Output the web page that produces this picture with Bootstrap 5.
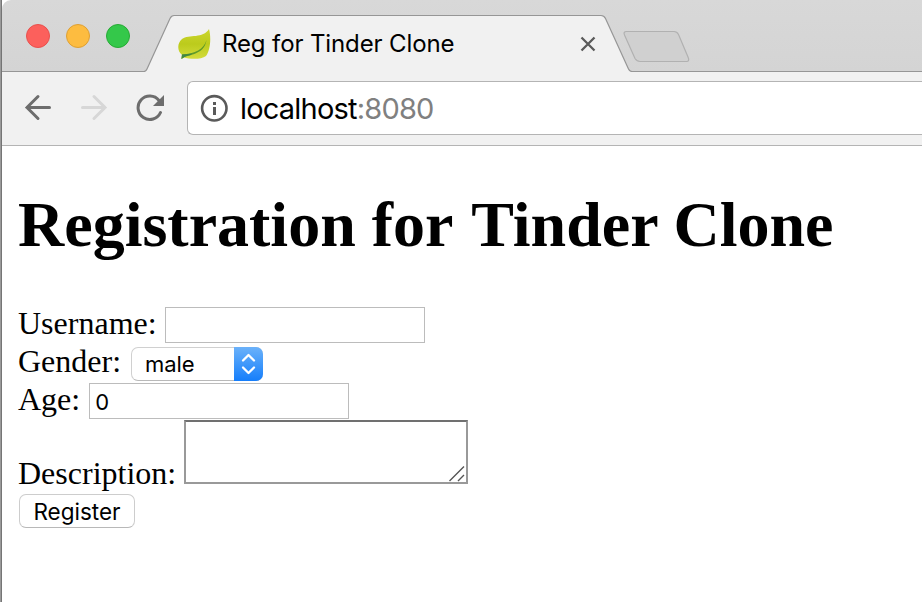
<!DOCTYPE html>
<html lang="en">
<head>
<meta charset="utf-8">
<meta name="viewport" content="width=device-width, initial-scale=1">
<title>Reg for Tinder Clone</title>
<link href="https://cdn.jsdelivr.net/npm/bootstrap@5.3.0/dist/css/bootstrap.min.css" rel="stylesheet">
<style>
  body { width: 922px; height: 602px; background: #fff; color: #000; font-family: Inter, Roboto, sans-serif; }
  .desktop-edge { width: 2px; background: linear-gradient(90deg, #9a9a9a 50%, #757575 50%); }
  .tab-strip { height: 72px; background: linear-gradient(#d8d8d8, #d4d4d4); border-top-left-radius: 9px; }
  .strip-shape { left: 0; top: 0; }
  .lights { width: 176px; padding: 24px 0 0 24px; gap: 16px; }
  .light { width: 24px; height: 24px; border-radius: 50%; border: 1px solid; }
  .light-close { background: #fc605c; border-color: #e8504d; }
  .light-min { background: #fdbc40; border-color: #dea034; }
  .light-max { background: #34c84a; border-color: #27aa35; }
  .tab-body { width: 422px; padding-top: 16px; }
  .tab-title { font: 24px/56px Inter, Roboto, sans-serif; margin-left: 10px; width: 358px; letter-spacing: -.12px; }
  .toolbar { height: 74px; background: #f1f1f1; border-bottom: 1px solid #b4b4b4; padding: 9px 0 0 22px; }
  .nav-icons { width: 163px; padding-top: 13px; }
  .address { height: 54px; border: 1px solid #b4b4b4; border-right: 0; border-radius: 6px 0 0 6px; background: #fff; padding-left: 12px; }
  .url { font: 29px/52px Inter, Roboto, sans-serif; margin-left: 12px; padding-top: 2px; letter-spacing: -.8px; }
  .url span { color: #808080; }
  .page { padding: 42px 16px 0; font-family: "Liberation Serif", serif; }
  .page h1 { font: bold 64px/74px "Liberation Serif", serif; margin: 0 0 44px; white-space: nowrap; }
  .app-name { margin-left: 3px; }
  .field { height: 38px; gap: 8px; }
  .field label { font-size: 32px; line-height: 36px; margin-top: -1px; }
  .field-area { height: 74px; }
  .field-area label { margin-top: 35px; }
  .box { width: 260px; height: 36px; margin-top: 1px; border: 1px solid #bcbcbc; padding: 2px 5px 0; border-radius: 0; font: 22px/32px Inter, Roboto, sans-serif; color: #000; background: #fff; outline: 0; }
  .box-age { margin-left: 1px; }
  .area { width: 284px; height: 64px; border: 2px solid #999; border-top-color: #707070; resize: none; border-radius: 0; display: block; outline: 0; }
  .area-grip { right: 3px; bottom: 2px; }
  .picker { width: 132px; height: 34px; margin: 3px 0 0 2px; border: 1px solid #d0d0d0; border-bottom-color: #b9b9b9; border-radius: 7px; background: #fff; padding: 0 0 0 13px; font: 22px/33px Inter, Roboto, sans-serif; color: #000; letter-spacing: -.1px; }
  .picker-arrows { width: 29px; height: 34px; margin: -1px; border-radius: 0 7px 7px 0; background: linear-gradient(#6bb2fa, #157efb); }
  .submit { width: 116px; height: 34px; margin-left: 1px; padding: 1px 0 0; border: 1px solid #cdcdcd; border-bottom-color: #b8b8b8; border-radius: 7px; background: #fff; font: 22.5px/32px Inter, Roboto, sans-serif; color: #000; }
</style>
</head>
<body class="d-flex overflow-hidden">
<div class="desktop-edge flex-shrink-0"></div>
<div class="flex-grow-1 overflow-hidden">
  <header>
    <div class="tab-strip position-relative overflow-hidden">
      <svg class="strip-shape position-absolute" width="920" height="72" viewBox="2 0 920 72" aria-hidden="true">
        <path d="M0 71.5H144Q146 71.5 147 69L170 18.500Q171.500 15.500 174 15.500H601Q604 15.500 605.500 18.500L628.500 69Q629.500 71.500 632 71.500H924V74H0Z" fill="#f1f1f1" stroke="#969696" stroke-width="1.2"/>
        <path d="M626.500 31.500H674Q677 31.500 678.500 34.500L688 57Q690 61.500 686.500 61.500H640Q637 61.500 635 58.500L624.500 35Q623 31.500 626.500 31.500Z" fill="#d0d0d0" stroke="#b1b1b1" stroke-width="1.2"/>
      </svg>
      <div class="position-relative d-flex">
        <div class="lights d-flex"><span class="light light-close"></span><span class="light light-min"></span><span class="light light-max"></span></div>
        <div class="tab-body d-flex align-items-center">
          <svg width="34" height="34" viewBox="0 0 34 34" aria-hidden="true">
            <defs><linearGradient id="leaf" x1="0" y1="0" x2="0" y2="1"><stop offset="0" stop-color="#ccd62f"/><stop offset=".5" stop-color="#bccb1c"/><stop offset="1" stop-color="#d3dc3c"/></linearGradient></defs>
            <path d="M31 2C33 9 33 22 28 29C23 33 11 32 6 30.500L3.500 32L4 28C-1 24-1 16 4 12C11 7 25 12 31 2Z" fill="url(#leaf)"/>
            <path d="M28.500 13C26 22 17 27 4 27.500L3.500 32C10 26.500 26 29 28.500 13Z" fill="#5f9a28"/>
            <path d="M4 27.500L3.500 32C6 29.500 9 28.800 13 28L14 26.500Q9 27.500 4 27.500Z" fill="#418744"/>
          </svg>
          <span class="tab-title">Reg for Tinder Clone</span>
          <svg width="16" height="16" viewBox="0 0 16 16" stroke="#5a5a5a" stroke-width="2.300" aria-hidden="true"><path d="M1.500 1.500l13 13M14.500 1.500l-13 13"/></svg>
        </div>
      </div>
    </div>
    <div class="toolbar d-flex">
      <div class="nav-icons d-flex flex-shrink-0">
        <svg width="141" height="28" viewBox="24 94 141 28" fill="none" stroke="#6d6d6d" stroke-width="3" stroke-linecap="round" aria-hidden="true">
          <path d="M49.500 107.500H27M38 96.500L27 107.500L38 118.500"/>
          <path d="M82.500 107.500H105M94 96.500L105 107.500L94 118.500" stroke="#d7d7d7"/>
          <path d="M159 100.500A11.700 11.700 0 1 0 160.500 112.500"/>
          <path d="M164 95V106H153Z" fill="#6d6d6d" stroke="none"/>
        </svg>
      </div>
      <div class="address d-flex align-items-center flex-grow-1">
        <svg width="28" height="28" viewBox="0 0 28 28" aria-hidden="true"><circle cx="14.300" cy="14.300" r="12.200" fill="none" stroke="#5a5a5a" stroke-width="2.600"/><path d="M13 8h3v3h-3zM13 13h3v8h-3z" fill="#5a5a5a"/></svg>
        <div class="url">localhost<span>:8080</span></div>
      </div>
    </div>
  </header>
  <main class="page">
    <h1>Registration for <span class="app-name">Tinder Clone</span></h1>
    <form>
      <div class="field d-flex align-items-start"><label for="username">Username:</label><input id="username" class="box" type="text"></div>
      <div class="field d-flex align-items-start"><label for="gender">Gender:</label>
        <button id="gender" type="button" class="picker d-flex justify-content-between"><span>male</span>
          <span class="picker-arrows"><svg class="d-block" width="29" height="34" viewBox="0 0 29 34" fill="none" stroke="#fff" stroke-width="2.300" stroke-linecap="round" stroke-linejoin="round" aria-hidden="true"><path d="M9 13.500L14.500 8L20 13.500M9 20.500L14.500 26L20 20.500"/></svg></span>
        </button>
      </div>
      <div class="field d-flex align-items-start"><label for="age">Age:</label><input id="age" class="box box-age" type="text" value="0"></div>
      <div class="field field-area d-flex align-items-start"><label for="description">Description:</label>
        <div class="position-relative"><textarea id="description" class="area"></textarea>
          <svg class="area-grip position-absolute" width="16" height="16" viewBox="0 0 16 16" stroke="#555" stroke-width="1.400" aria-hidden="true"><path d="M.5 15L15 .5M9 15L15 9"/></svg>
        </div>
      </div>
      <button type="button" class="submit d-block">Register</button>
    </form>
  </main>
</div>
<script src="https://cdn.jsdelivr.net/npm/bootstrap@5.3.0/dist/js/bootstrap.bundle.min.js"></script>
</body>
</html>
